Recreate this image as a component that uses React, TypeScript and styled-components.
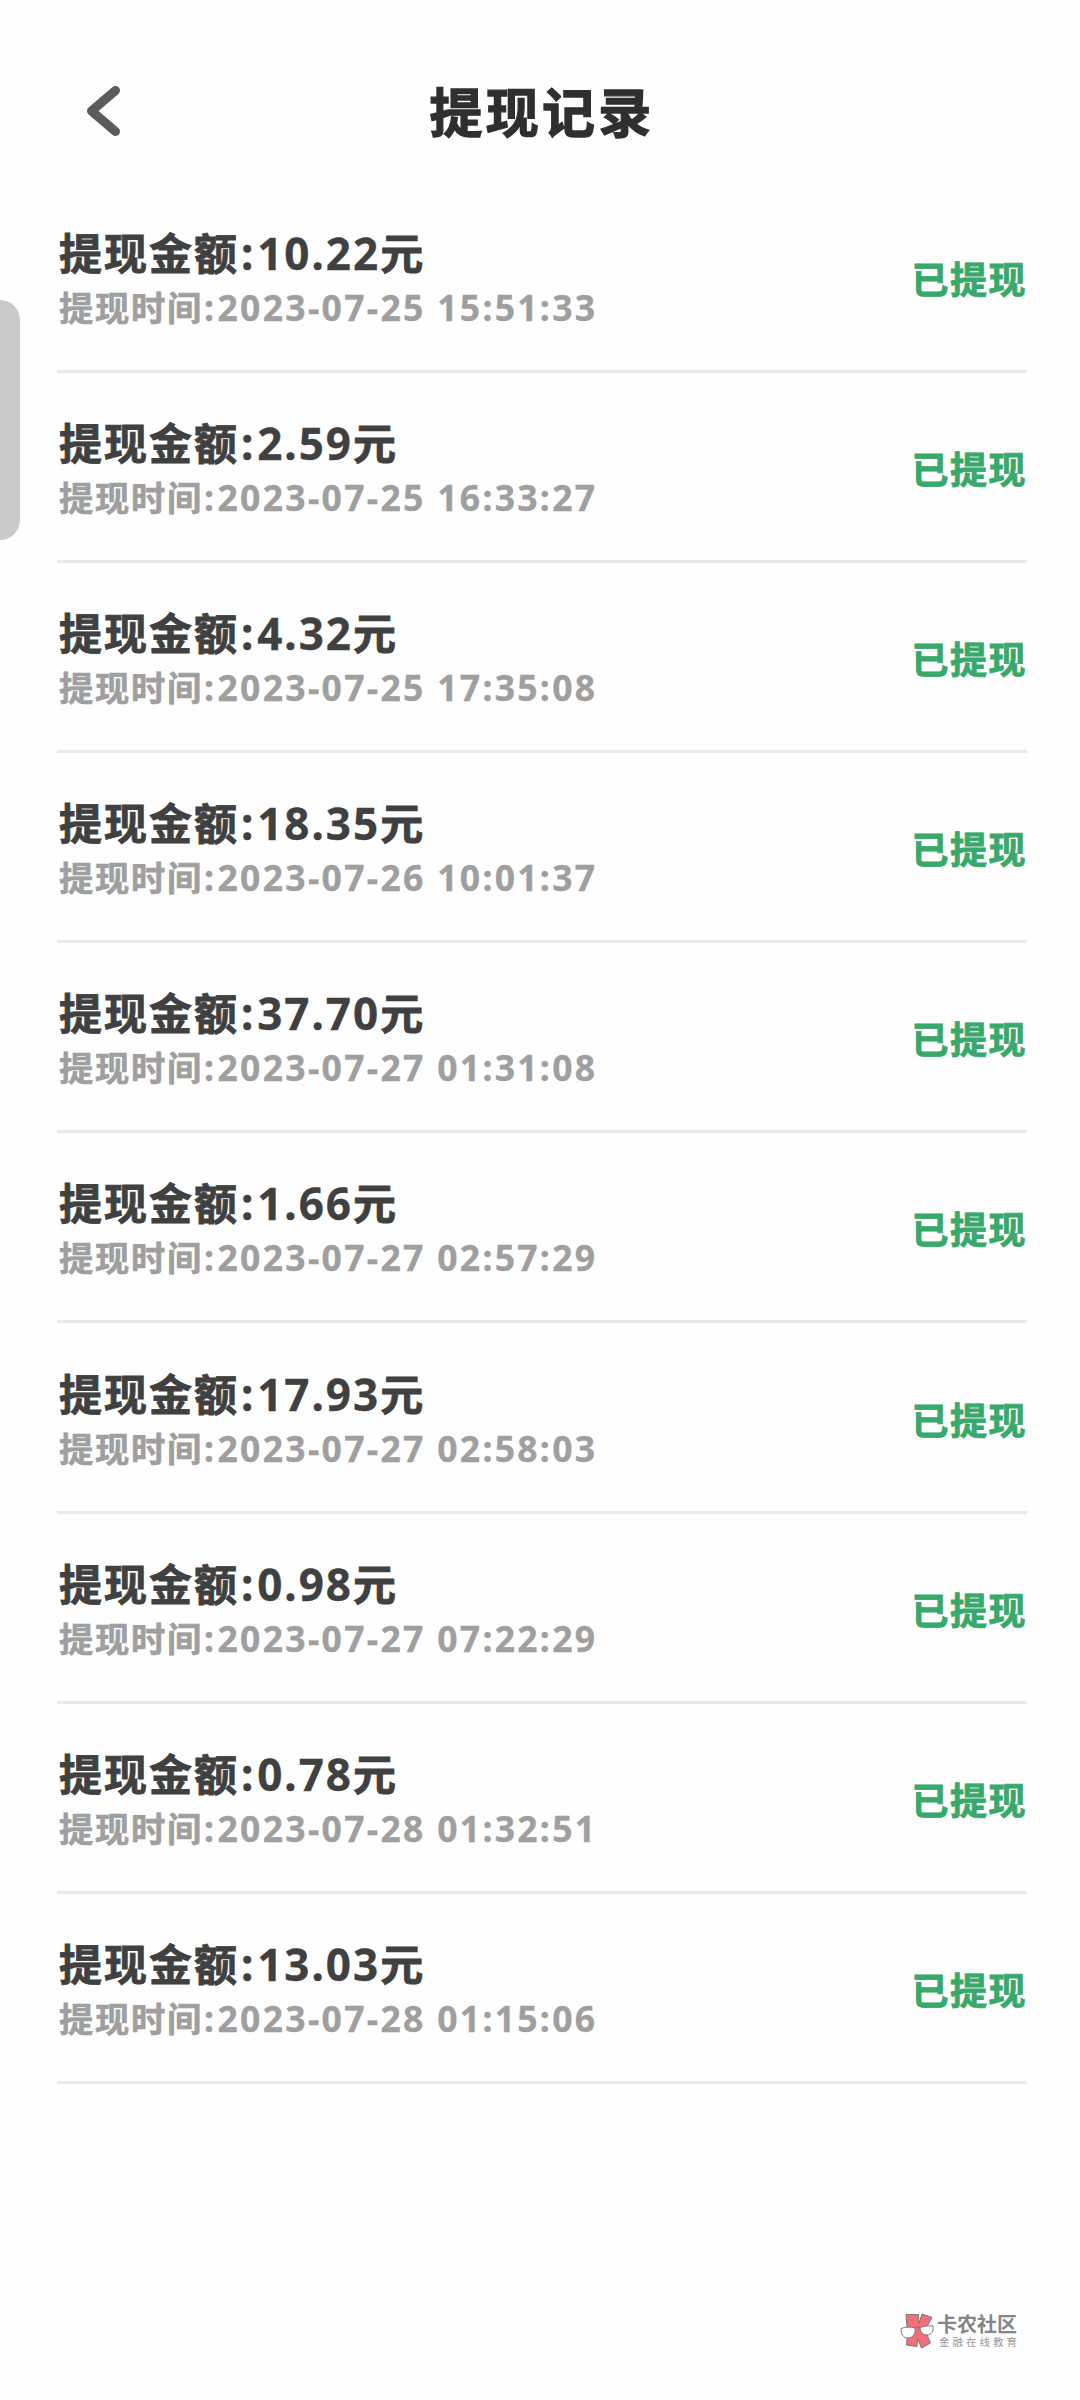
import React from "react";
import styled, { createGlobalStyle } from "styled-components";

const GlobalStyle = createGlobalStyle`
  * { box-sizing: border-box; }
  body {
    margin: 0;
    background: #fefefe;
    font-family: "Noto Sans", "Noto Sans CJK SC", sans-serif;
  }
`;

const Screen = styled.div`
  position: relative;
  display: flex;
  flex-direction: column;
  width: 1080px;
  height: 2400px;
  overflow: hidden;
  background: #fefefe;
`;

const Header = styled.header`
  display: grid;
  grid-template-columns: 1fr auto 1fr;
  align-items: center;
  height: 180px;
  padding: 41px 54px 0 58px;
`;

const BackButton = styled.button`
  display: flex;
  width: 90px;
  height: 90px;
  padding: 0;
  border: 0;
  background: none;
  align-items: center;
  justify-content: center;
`;

const Title = styled.h1`
  margin: 0;
  padding-bottom: 2px;
  font-family: "Noto Sans CJK SC", sans-serif;
  font-size: 53px;
  line-height: 80px;
  font-weight: 700;
  letter-spacing: 3.3px;
  color: #2f2f2f;
  -webkit-text-stroke: 1.3px #2f2f2f;
`;

const List = styled.ul`
  display: flex;
  flex-direction: column;
  margin: 0;
  padding: 2.6px 53px 0 57px;
  list-style: none;
`;

const Row = styled.li`
  display: flex;
  align-items: center;
  justify-content: space-between;
  height: 190.15px;
  border-bottom: 3px solid #e9e9e9;
`;

const Details = styled.div`
  display: flex;
  flex-direction: column;
  padding: 0 0 1px 2px;
`;

const Amount = styled.div`
  height: 60px;
  font-family: "Noto Sans CJK SC", sans-serif;
  font-size: 43px;
  line-height: 60px;
  font-weight: 700;
  letter-spacing: 2px;
  white-space: nowrap;
  color: #404040;
  -webkit-text-stroke: 0.8px #404040;
`;

const Time = styled.div`
  height: 50px;
  font-family: "Noto Sans CJK SC", sans-serif;
  font-size: 34.3px;
  line-height: 50px;
  font-weight: 700;
  letter-spacing: 1.7px;
  white-space: nowrap;
  color: #9f9f9f;
  -webkit-text-stroke: 0.6px #9f9f9f;
`;

const Figures = styled.span<{ $size: number; $spacing: number }>`
  font-family: "Noto Sans", sans-serif;
  font-size: ${(p) => p.$size}px;
  letter-spacing: ${(p) => p.$spacing}px;
  line-height: 1;
  -webkit-text-stroke-width: 0.3px;
`;

const Colon = styled.span<{ $space: number }>`
  padding-left: ${(p) => p.$space}px;
  padding-right: ${(p) => p.$space}px;
`;

const Status = styled.span`
  padding-top: 3px;
  font-family: "Noto Sans CJK SC", sans-serif;
  font-size: 37px;
  line-height: 54px;
  font-weight: 700;
  letter-spacing: 1.5px;
  color: #36a96b;
  -webkit-text-stroke: 0.8px #36a96b;
`;

const EdgeHandle = styled.div`
  position: absolute;
  left: 0;
  top: 300px;
  width: 20px;
  height: 240px;
  border-radius: 0 20px 20px 0;
  background: #cacaca;
`;

const Brand = styled.footer`
  display: flex;
  align-items: center;
  align-self: flex-end;
  gap: 3px;
  margin: auto 60px 51px 0;
`;

const BrandText = styled.div`
  display: flex;
  flex-direction: column;
  font-family: "Noto Sans CJK SC", sans-serif;
  white-space: nowrap;
`;

const BrandName = styled.span`
  font-size: 20px;
  line-height: 20px;
  font-weight: 700;
  color: #858585;
`;

const BrandTagline = styled.span`
  font-size: 10.5px;
  line-height: 15px;
  letter-spacing: 3px;
  padding-left: 2px;
  color: #999;
`;

const records = [
  { amount: "10.22", time: "2023-07-25 15:51:33" },
  { amount: "2.59", time: "2023-07-25 16:33:27" },
  { amount: "4.32", time: "2023-07-25 17:35:08" },
  { amount: "18.35", time: "2023-07-26 10:01:37" },
  { amount: "37.70", time: "2023-07-27 01:31:08" },
  { amount: "1.66", time: "2023-07-27 02:57:29" },
  { amount: "17.93", time: "2023-07-27 02:58:03" },
  { amount: "0.98", time: "2023-07-27 07:22:29" },
  { amount: "0.78", time: "2023-07-28 01:32:51" },
  { amount: "13.03", time: "2023-07-28 01:15:06" },
];

export default function App() {
  return (
    <Screen>
      <GlobalStyle />
      <Header>
        <BackButton aria-label="返回">
          <svg width="90" height="90" viewBox="0 0 90 90" fill="none">
            <path
              d="M57.5 24.500 33.5 45 57.5 65.5"
              stroke="#5b5b5b"
              strokeWidth="9"
              strokeLinecap="round"
              strokeLinejoin="round"
            />
          </svg>
        </BackButton>
        <Title>提现记录</Title>
      </Header>
      <List>
        {records.map((record) => (
          <Row key={record.time}>
            <Details>
              <Amount>
                提现金额
                <Figures $size={44} $spacing={2}>
                  <Colon $space={1.9}>:</Colon>
                  {record.amount}
                </Figures>
                元
              </Amount>
              <Time>
                提现时间
                <Figures $size={35.5} $spacing={2.3}>
                  <Colon $space={1.1}>:</Colon>
                  {record.time}
                </Figures>
              </Time>
            </Details>
            <Status>已提现</Status>
          </Row>
        ))}
      </List>
      <EdgeHandle />
      <Brand>
        <svg width="34" height="36" viewBox="0 0 34 36">
          <g stroke="#777" strokeWidth="1" strokeLinejoin="round">
            <path d="M6 1.500h12.500l.5 9 3-9.500 10 3.500-7 12.500 5.500 13-9 5-4-9.500-.5 8L6.500 32l1-12Z" fill="#f46d7b" />
            <path d="M1 15.500c4-1.500 10-2 14-.5 1 5.500-2 10-7 10s-7-4-7-9.500Z" fill="#fff" />
            <path d="M20 14.500c4-1.500 8-2 13-1.500 1 5.500-2 9-6 9s-7-3-7-7.500Z" fill="#fff" />
            <path d="M15 15q2.500-2 5-.5" fill="none" />
          </g>
        </svg>
        <BrandText>
          <BrandName>卡农社区</BrandName>
          <BrandTagline>金融在线教育</BrandTagline>
        </BrandText>
      </Brand>
    </Screen>
  );
}
